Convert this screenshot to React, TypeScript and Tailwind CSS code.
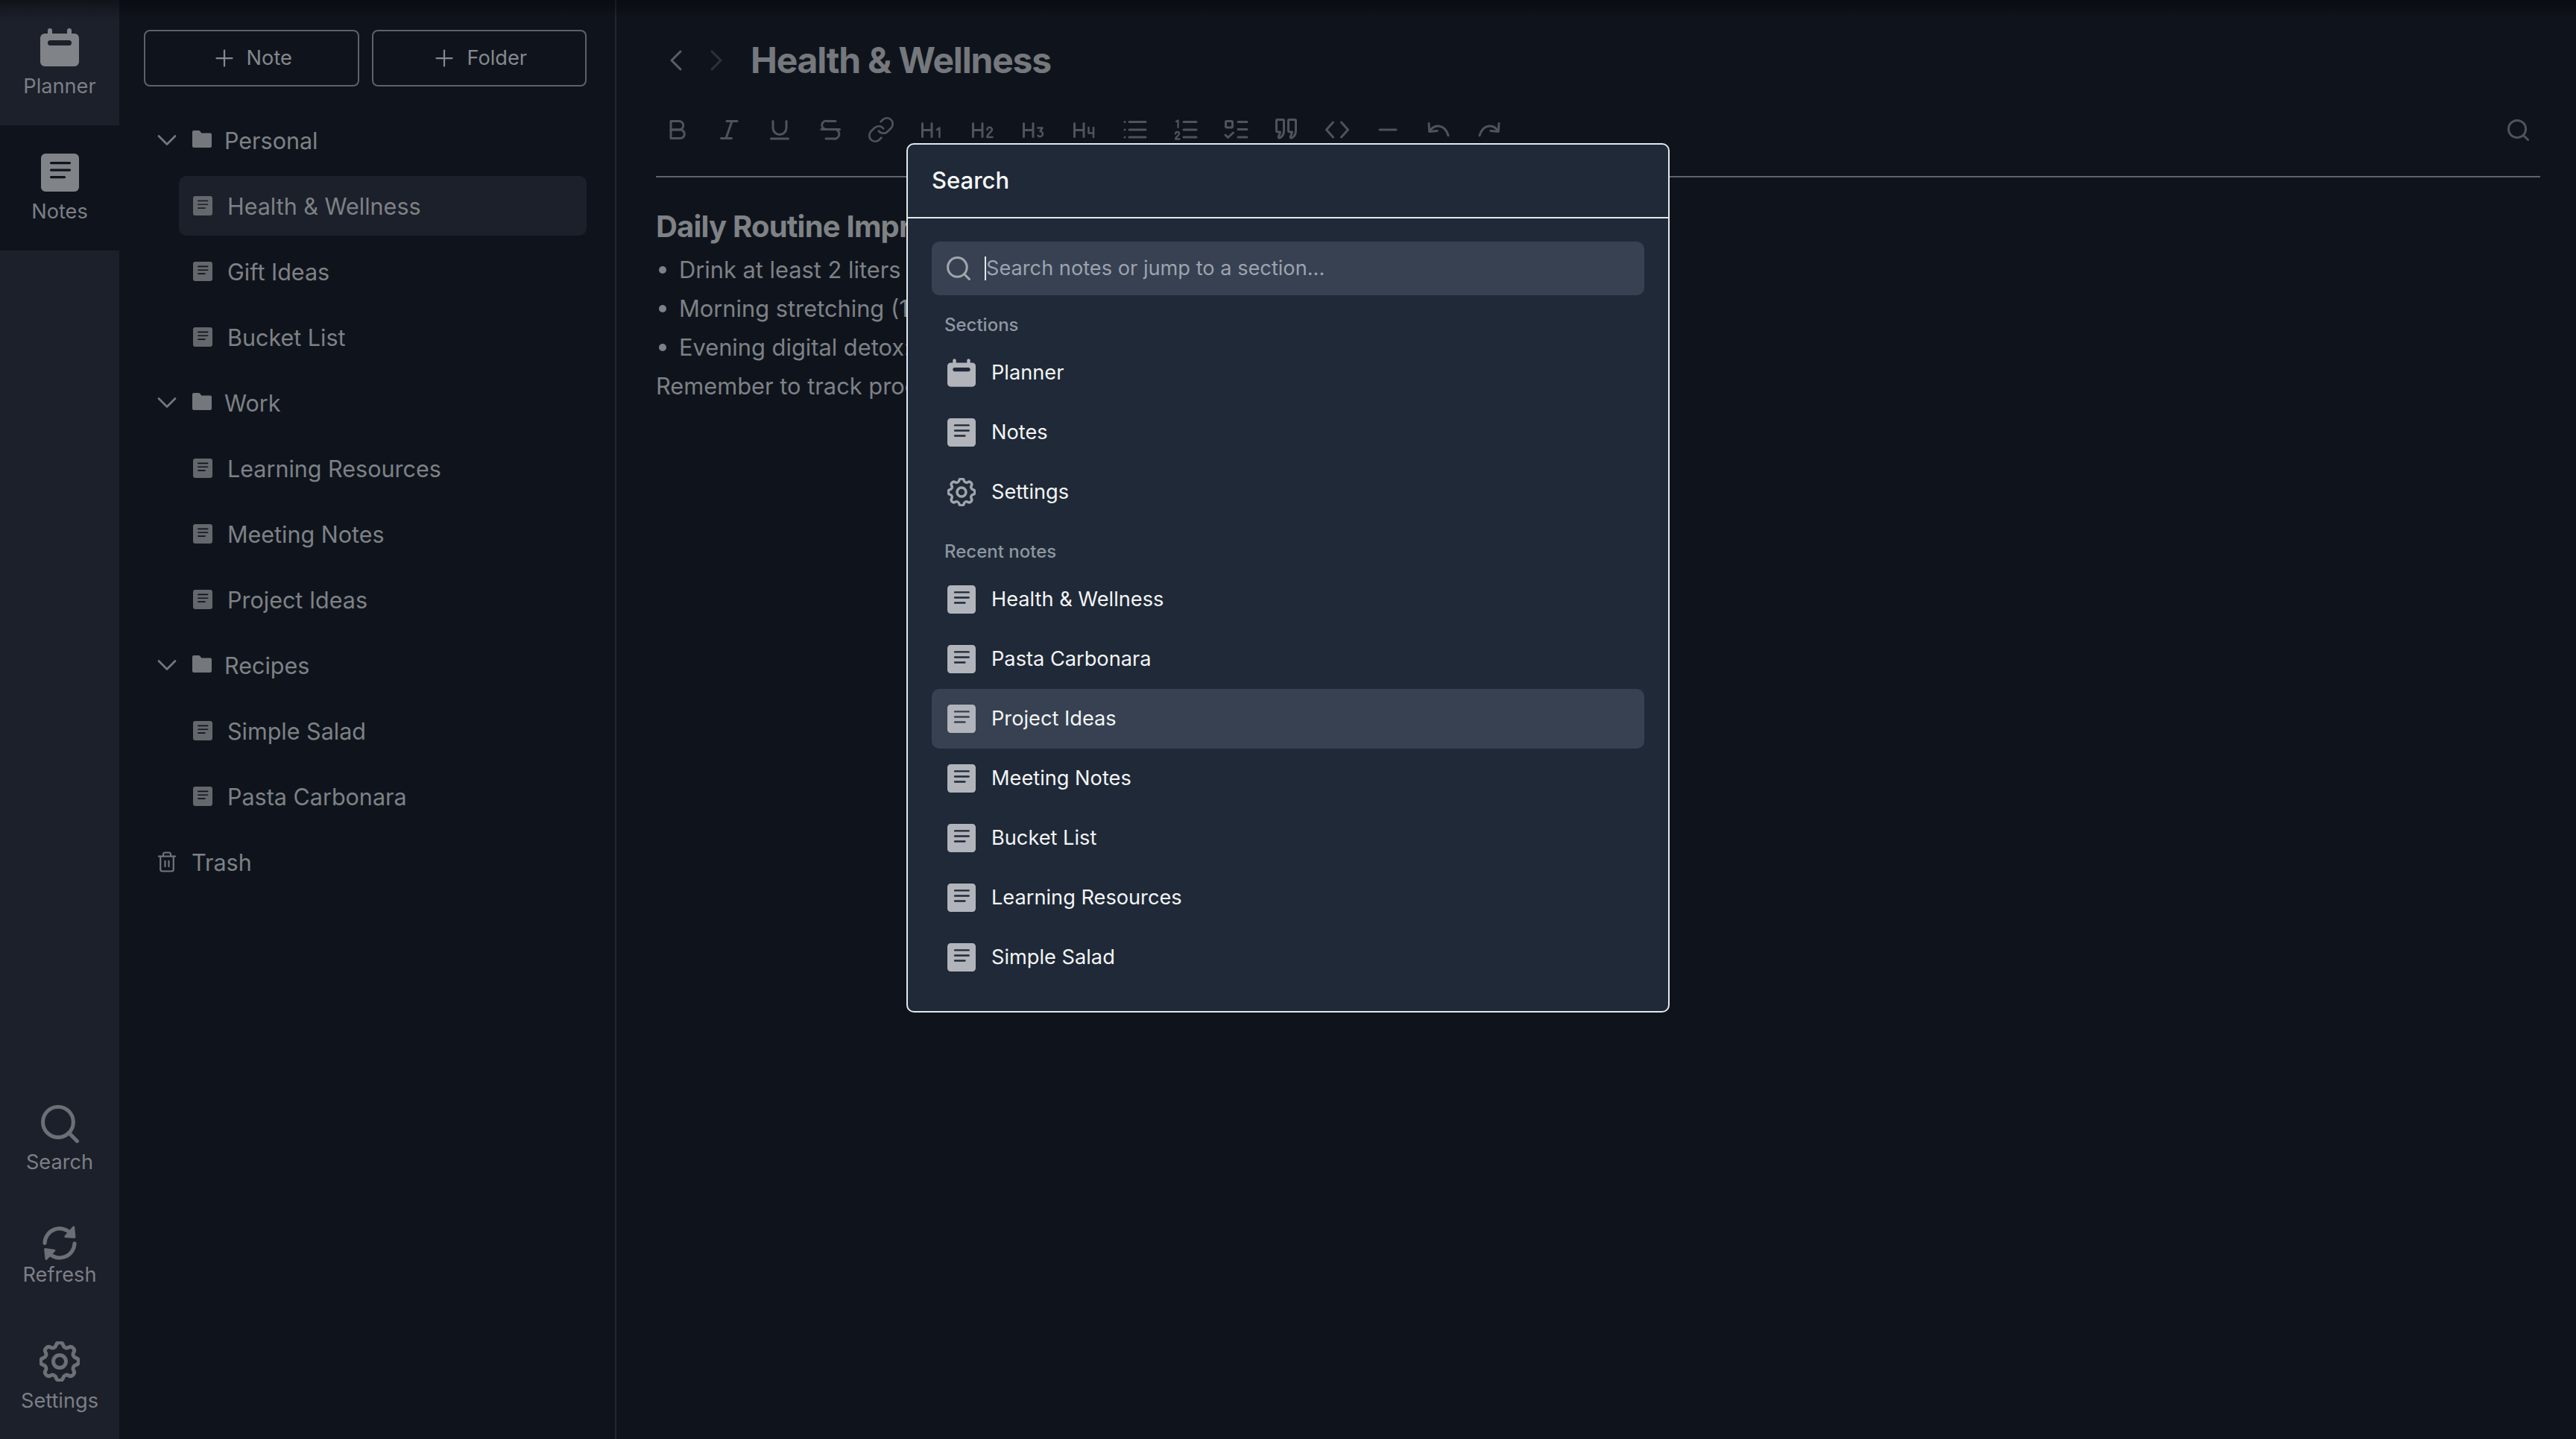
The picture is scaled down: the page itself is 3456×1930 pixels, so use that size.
import React from "react";
import { ChevronDown, ChevronLeft, ChevronRight, Link as LinkIcon, Plus, Search, Trash2 } from "lucide-react";
import { TbSettings } from "react-icons/tb";

function NoteIcon({ className }: { className?: string }) {
  return (
    <svg viewBox="0 0 51 51" className={className} fill="currentColor">
      <path
        fillRule="evenodd"
        d="M6 0h39a6 6 0 0 1 6 6v39a6 6 0 0 1-6 6H6a6 6 0 0 1-6-6V6a6 6 0 0 1 6-6z M13.5 11h25a1.6 1.6 0 0 1 0 3.2h-25a1.6 1.6 0 0 1 0-3.2z M13.5 20.5h25a1.6 1.6 0 0 1 0 3.2h-25a1.6 1.6 0 0 1 0-3.2z M13.5 30h18a1.6 1.6 0 0 1 0 3.2h-18a1.6 1.6 0 0 1 0-3.2z"
      />
    </svg>
  );
}

function PlannerIcon({ className }: { className?: string }) {
  return (
    <svg viewBox="0 0 52 51" className={className} fill="currentColor">
      <rect x="10" y="0" width="6" height="12" rx="3" />
      <rect x="36" y="0" width="6" height="12" rx="3" />
      <path
        fillRule="evenodd"
        d="M6 7h40a6 6 0 0 1 6 6v32a6 6 0 0 1-6 6H6a6 6 0 0 1-6-6V13a6 6 0 0 1 6-6z M13.5 16a3.5 3.5 0 0 0 0 7h25a3.5 3.5 0 0 0 0-7z"
      />
    </svg>
  );
}

function FolderIcon({ className }: { className?: string }) {
  return (
    <svg viewBox="0 0 26 23" className={className} fill="currentColor">
      <path d="M2 0h6.5c.8 0 1.4.4 1.9 1l2 2.6H24a2 2 0 0 1 2 2V21a2 2 0 0 1-2 2H2a2 2 0 0 1-2-2V2a2 2 0 0 1 2-2z" />
    </svg>
  );
}

function RefreshIcon({ className }: { className?: string }) {
  return (
    <svg viewBox="165 600 150 155" className={className} fill="none" stroke="currentColor" strokeWidth="16" strokeLinecap="round" strokeLinejoin="round">
      <path d="M178 678A62 62 0 0 1 285 637" />
      <path d="M302 680A62 62 0 0 1 195 720" />
      <path d="M298 612l4 42-38-3z" fill="currentColor" strokeWidth="9" />
      <path d="M184 744l-4-40 38 5z" fill="currentColor" strokeWidth="9" />
    </svg>
  );
}

// toolbar glyphs share a 36 box
function Tool({ children, className }: { children: React.ReactNode; className?: string }) {
  return (
    <svg viewBox="0 0 36 36" className={`w-9 h-9 ${className ?? ""}`} fill="none" stroke="currentColor" strokeWidth="3" strokeLinecap="round" strokeLinejoin="round">
      {children}
    </svg>
  );
}

function Heading({ digit }: { digit: string }) {
  return (
    <Tool>
      <path d="M5.5 9.5V27.5M18 9.5V27.5M5.5 18.5H18" />
      <path d={digit} strokeWidth="2.6" />
    </Tool>
  );
}

const toolbar: React.ReactNode[] = [
  <Tool key="bold">
    <path d="M8 6.5h11a5.75 5.75 0 0 1 0 11.5H8z" />
    <path d="M8 18h12.5a5.75 5.75 0 0 1 0 11.5H8z" />
  </Tool>,
  <Tool key="italic">
    <path d="M15 6.5h14M7.5 29.5h14M22 6.5l-8 23" />
  </Tool>,
  <Tool key="underline">
    <path d="M9 6.5v9a9 9 0 0 0 18 0v-9M6.5 30h23" />
  </Tool>,
  <Tool key="strike">
    <path d="M25 6.5H14a5.5 5.5 0 0 0-3.5 10.5M6 17.5h24.5M25 17.5a6 6 0 0 1-3 12.5H12" />
  </Tool>,
  <LinkIcon key="link" size={38} strokeWidth={1.7} />,
  <Heading key="h1" digit="M25 18l3.4-2.5v12.5" />,
  <Heading key="h2" digit="M24.5 18a3.2 3.2 0 0 1 6.4 0c0 3-6.4 5-6.4 10h7" />,
  <Heading key="h3" digit="M24.5 15.5h6l-3 4.5a3.6 3.6 0 1 1-3 5.8" />,
  <Heading key="h4" digit="M24.5 15v7.5h6.8M31 15v13" />,
  <Tool key="ul">
    <path d="M11 7.5h22M11 18h22M11 28h22" />
    <path d="M5 7.5h.01M5 18h.01M5 28h.01" />
  </Tool>,
  <Tool key="ol">
    <path d="M16 7.5h17M16 18h17M16 28h17" />
    <path d="M6 7l2.5-1.5V15" strokeWidth="2.3" />
    <path d="M5 23.5a2.5 2.5 0 0 1 5 0c0 2.5-5 4-5 7h5.5" strokeWidth="2.3" />
  </Tool>,
  <Tool key="check">
    <rect x="4.5" y="6.5" width="9" height="8.5" rx="1.5" />
    <path d="M21 7.5h12M21 17.5h12M21 28h12M4 25l3.5 3.5 7-6.5" />
  </Tool>,
  <Tool key="quote">
    <path d="M5.5 4.5H13a1.5 1.5 0 0 1 1.5 1.5v13c0 4.5-2 8-5 9.8-1.5.8-3-.6-2-2.2 1-1.6 1.8-3.2 2-5.6H6.5a2 2 0 0 1-2-2V5.5a1 1 0 0 1 1-1z" />
    <path d="M21.5 4.5H29a1.5 1.5 0 0 1 1.5 1.5v13c0 4.5-2 8-5 9.8-1.5.8-3-.6-2-2.2 1-1.6 1.8-3.2 2-5.6h-3a2 2 0 0 1-2-2V5.5a1 1 0 0 1 1-1z" />
  </Tool>,
  <Tool key="code">
    <path d="M12.5 8L3.5 18l9 10M23.5 8l9 10-9 10" />
  </Tool>,
  <Tool key="rule">
    <path d="M7 18h22" />
  </Tool>,
  <Tool key="undo">
    <path d="M5 9.5l.7 11 10.5-1M5.7 20.5C9 15 14 12.5 19 13.2c6 .8 10 6 12 12.5" />
  </Tool>,
  <Tool key="redo" className="-scale-x-100">
    <path d="M5 9.5l.7 11 10.5-1M5.7 20.5C9 15 14 12.5 19 13.2c6 .8 10 6 12 12.5" />
  </Tool>,
];

function RailLabel({ children }: { children: React.ReactNode }) {
  return <span className="text-[27.2px] leading-[36px] text-[#7c7f85]">{children}</span>;
}

function FolderRow({ label }: { label: string }) {
  return (
    <div className="h-20 flex items-center pl-[9px]">
      <ChevronDown size={44} strokeWidth={1.5} className="text-[#74777c] shrink-0" />
      <FolderIcon className="w-[26px] h-[23px] ml-3 mb-1 text-[#74777c] shrink-0" />
      <span className="ml-[17px] pt-[2px] text-[30.5px] text-[#7e8186]">{label}</span>
    </div>
  );
}

function NoteRow({ label, active }: { label: string; active?: boolean }) {
  return (
    <div className={`h-20 ml-[47px] pl-[19px] flex items-center gap-5 rounded-[10px] ${active ? "bg-[#1c202a]" : ""}`}>
      <NoteIcon className="w-[26px] h-[26px] text-[#64676c] shrink-0" />
      <span className="pt-[2px] text-[30.5px] text-[#7e8186]">{label}</span>
    </div>
  );
}

function SearchRow({ label, icon, active }: { label: string; icon?: React.ReactNode; active?: boolean }) {
  return (
    <div className={`h-20 pl-[21px] flex items-center gap-[21px] rounded-[10px] ${active ? "bg-[#374151]" : ""}`}>
      {icon ?? <NoteIcon className="w-[38px] h-[38px] text-[#b1b4ba] shrink-0" />}
      <span className="text-[27.2px] text-[#f3f4f6]">{label}</span>
    </div>
  );
}

function SectionLabel({ children }: { children: React.ReactNode }) {
  return <div className="mt-6 mb-2 pl-[17px] text-[24px] leading-8 font-medium text-[#8f96a1]">{children}</div>;
}

export default function App() {
  return (
    <div className="relative flex w-full h-screen overflow-hidden bg-[#0f141c] [font-family:Inter,sans-serif] antialiased">
      <nav className="w-40 shrink-0 flex flex-col bg-[#1c202a]">
        <div className="h-[168px] pt-[38px] flex flex-col items-center">
          <PlannerIcon className="w-[52px] h-[51px] text-[#808387] mb-[9px]" />
          <RailLabel>Planner</RailLabel>
        </div>
        <div className="h-[168px] pt-[38px] flex flex-col items-center bg-[#0f141c]">
          <NoteIcon className="w-[51px] h-[51px] text-[#808387] mb-[9px]" />
          <RailLabel>Notes</RailLabel>
        </div>
        <div className="flex-1" />
        <div className="h-[152px] pt-10 flex flex-col items-center">
          <Search size={51} viewBox="2 2 20 20" strokeWidth={2} className="text-[#6c6f75] mb-[8px]" />
          <RailLabel>Search</RailLabel>
        </div>
        <div className="h-[168px] pt-12 flex flex-col items-center">
          <RefreshIcon className="w-[50px] h-[50px] text-[#6c6f75]" />
          <RailLabel>Refresh</RailLabel>
        </div>
        <div className="h-[168px] pt-[37px] flex flex-col items-center">
          <TbSettings size={54} viewBox="2.5 2.5 19 19" strokeWidth={1.75} className="text-[#6c6f75] mb-2" />
          <RailLabel>Settings</RailLabel>
        </div>
      </nav>

      <aside className="w-[667px] shrink-0 border-r-2 border-[#23272f] pl-[33px] pr-[38px] pt-10">
        <div className="flex gap-[17px]">
          <button className="flex-1 h-[76px] rounded-[8px] border-2 border-[#5d6168] flex items-center justify-center gap-3 text-[27.2px] text-[#85888d]">
            <Plus size={36} strokeWidth={1.5} />
            Note
          </button>
          <button className="flex-1 h-[76px] rounded-[8px] border-2 border-[#5d6168] flex items-center justify-center gap-3 text-[27.2px] text-[#85888d]">
            <Plus size={36} strokeWidth={1.5} />
            Folder
          </button>
        </div>
        <div className="mt-8 flex flex-col gap-2">
          <FolderRow label="Personal" />
          <NoteRow label="Health & Wellness" active />
          <NoteRow label="Gift Ideas" />
          <NoteRow label="Bucket List" />
          <FolderRow label="Work" />
          <NoteRow label="Learning Resources" />
          <NoteRow label="Meeting Notes" />
          <NoteRow label="Project Ideas" />
          <FolderRow label="Recipes" />
          <NoteRow label="Simple Salad" />
          <NoteRow label="Pasta Carbonara" />
          <div className="h-20 flex items-center pl-[9px]">
            <div className="w-11 flex justify-center shrink-0">
              <Trash2 size={30} strokeWidth={1.7} className="text-[#74777c]" />
            </div>
            <span className="ml-[11px] pt-[2px] text-[30.5px] text-[#7e8186]">Trash</span>
          </div>
        </div>
      </aside>

      <main className="flex-1 min-w-0 pl-[53px] pr-12 pt-10">
        <div className="h-[82px] flex items-center">
          <div className="w-[54px] flex justify-center">
            <ChevronLeft size={48} strokeWidth={1.5} className="text-[#5b5f65]" />
          </div>
          <div className="w-[54px] flex justify-center">
            <ChevronRight size={48} strokeWidth={1.5} className="text-[#2d3138]" />
          </div>
          <h1 className="ml-[19px] text-[48px] font-bold tracking-[-0.025em] text-[#75787c]">Health &amp; Wellness</h1>
        </div>
        <div className="mt-[22px] pb-8 border-b-2 border-[#5f646b] flex items-center justify-between text-[#4f535a]">
          <div className="flex gap-2">
            {toolbar.map((icon, i) => (
              <div key={i} className="w-[60px] h-[60px] flex items-center justify-center">
                {icon}
              </div>
            ))}
          </div>
          <div className="w-[60px] h-[60px] flex items-center justify-center">
            <Search size={29} viewBox="2 2 20 20" strokeWidth={2} />
          </div>
        </div>
        <div className="pt-[40px] text-[30.8px] leading-[52px] text-[#7e8186]">
          <h2 className="text-[40px] leading-[52px] font-bold text-[#7f8285] tracking-[-0.02em]">Daily Routine Improvements</h2>
          <ul className="mt-[6px]">
            <li className="flex items-center">
              <span className="w-[10px] h-[10px] ml-[4px] mr-[17px] rounded-full bg-[#7e8186]" />
              Drink at least 2 liters of water
            </li>
            <li className="flex items-center">
              <span className="w-[10px] h-[10px] ml-[4px] mr-[17px] rounded-full bg-[#7e8186]" />
              Morning stretching (15 minutes)
            </li>
            <li className="flex items-center">
              <span className="w-[10px] h-[10px] ml-[4px] mr-[17px] rounded-full bg-[#7e8186]" />
              Evening digital detox: no phone
            </li>
          </ul>
          <p>Remember to track progress weekly.</p>
        </div>
      </main>

      <div className="absolute top-0 inset-x-0 h-[26px] bg-gradient-to-b from-black/40 to-transparent pointer-events-none" />

      <div className="absolute inset-0 flex justify-center items-start pt-[192px]">
        <div className="w-[1024px] rounded-[10px] border-2 border-[#e5e7eb] bg-[#1f2937]">
          <div className="h-[99px] pl-8 flex items-center border-b-2 border-[#e5e7eb] text-[31px] font-medium text-[#f9fafb]">Search</div>
          <div className="px-8 pt-[31px] pb-8">
            <div className="h-[72px] rounded-[10px] bg-[#374151] pl-5 flex items-center">
              <Search size={32} viewBox="2 2 20 20" strokeWidth={1.9} className="text-[#a1a6ad] shrink-0" />
              <span className="ml-[19px] w-[2px] h-[32px] bg-[#e5e7eb] shrink-0" />
              <span className="text-[27.2px] text-[#9ca3af]">Search notes or jump to a section...</span>
            </div>
            <SectionLabel>Sections</SectionLabel>
            <SearchRow label="Planner" icon={<PlannerIcon className="w-[38px] h-[38px] text-[#b1b4ba] shrink-0" />} />
            <SearchRow label="Notes" />
            <SearchRow label="Settings" icon={<TbSettings size={38} viewBox="2.5 2.5 19 19" strokeWidth={1.75} className="text-[#a1a6ad] shrink-0" />} />
            <SectionLabel>Recent notes</SectionLabel>
            <SearchRow label="Health & Wellness" />
            <SearchRow label="Pasta Carbonara" />
            <SearchRow label="Project Ideas" active />
            <SearchRow label="Meeting Notes" />
            <SearchRow label="Bucket List" />
            <SearchRow label="Learning Resources" />
            <SearchRow label="Simple Salad" />
          </div>
        </div>
      </div>
    </div>
  );
}
